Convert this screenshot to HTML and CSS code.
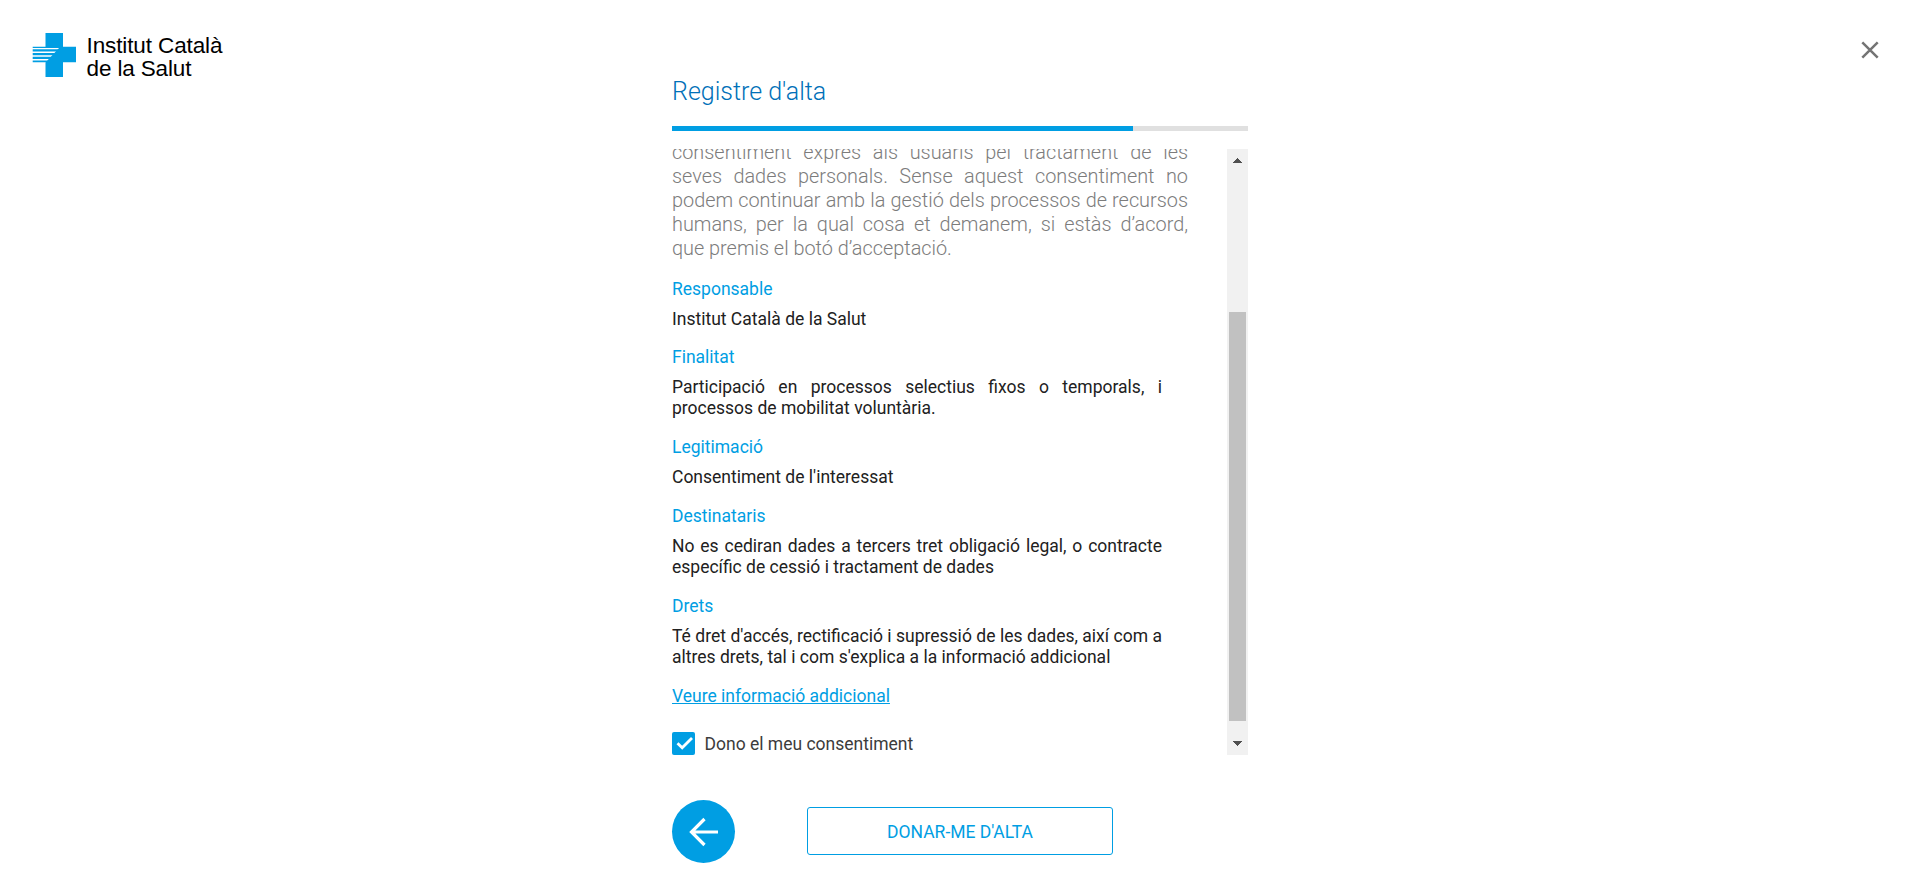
FILE: index.html
```html
<!DOCTYPE html>
<html lang="ca">
<head>
<meta charset="utf-8">
<title>Registre d'alta</title>
<link rel="stylesheet" href="styles.css">
</head>
<body>
<div class="page">
  <header class="side">
    <svg class="logo" viewBox="0 0 200 48" width="200" height="48" role="img">
      <path class="brand" d="M13.500 1H31V14.700H44V30.200H31V45H13.500V30.200H13.800L27 16H.7V14.700H13.500Z"/>
      <path class="brand" d="M.7 17.300H26.500L24.600 19.600H.7ZM.7 21H23.300L21.300 23.300H.7ZM.7 24.700H20L18 27H.7ZM.7 28.400H16.800L15 30.300H.7Z"/>
      <text class="logo-text" x="54.500" y="21.400" textLength="136">Institut Català</text>
      <text class="logo-text" x="54.500" y="43.500" textLength="105">de la Salut</text>
    </svg>
  </header>
  <main class="form">
    <h1 class="title">Registre d'alta</h1>
    <div class="progress"><div class="progress-fill" style="width:80%"></div></div>
    <div class="panel">
      <div class="content">
        <p class="intro">consentiment exprés als usuaris pel tractament de les seves dades personals. Sense aquest consentiment no podem continuar amb la gestió dels processos de recursos humans, per la qual cosa et demanem, si estàs d’acord, que&nbsp;premis el botó d’acceptació.</p>
        <section class="item"><h2>Responsable</h2><p>Institut Català de la Salut</p></section>
        <section class="item"><h2>Finalitat</h2><p>Participació en processos selectius fixos o temporals, i processos de mobilitat voluntària.</p></section>
        <section class="item"><h2>Legitimació</h2><p>Consentiment de l'interessat</p></section>
        <section class="item"><h2>Destinataris</h2><p>No es cediran dades a tercers tret obligació legal, o contracte específic de cessió i tractament de dades</p></section>
        <section class="item"><h2>Drets</h2><p>Té dret d'accés, rectificació i supressió de les dades, així com a altres drets, tal i com s'explica a la informació addicional</p></section>
        <a class="more">Veure informació addicional</a>
        <label class="consent">
          <svg class="check" width="23" height="23" viewBox="0 0 23 23"><rect class="brand" width="23" height="23" rx="2"/><path d="M5.500 11.300L10.200 15.800L20 6" fill="none" stroke="#fff" stroke-width="2.800"/></svg>
          <span>Dono el meu consentiment</span>
        </label>
      </div>
      <div class="scrollbar">
        <svg width="9" height="5" viewBox="0 0 9 5" shape-rendering="crispEdges"><path d="M0 5L4.500 0L9 5Z" fill="#505050"/></svg>
        <div class="thumb"></div>
        <svg width="9" height="5" viewBox="0 0 9 5" shape-rendering="crispEdges"><path d="M0 0H9L4.500 5Z" fill="#505050"/></svg>
      </div>
    </div>
    <div class="actions">
      <button class="back" aria-label="Enrere"><svg width="30" height="30" viewBox="0 0 30 30"><path d="M29 15H3M15.500 2L2.500 15L15.500 28" fill="none" stroke="#fff" stroke-width="3.200"/></svg></button>
      <button class="submit">DONAR-ME D'ALTA</button>
    </div>
  </main>
  <div class="side side-end">
    <svg class="close" width="18" height="18" viewBox="0 0 18 18"><path d="M1.300 1.300L16.700 16.700M16.700 1.300L1.300 16.700" stroke="#747474" stroke-width="2.500"/></svg>
  </div>
</div>
</body>
</html>
```
FILE: styles.css
```css
* { box-sizing: border-box; }
body { margin: 0; background: #fff; font-family: Roboto, sans-serif; overflow: hidden; }
.page { display: grid; grid-template-columns: 1fr 576px 1fr; height: 894px; }
.side { padding: 32px; }
.side-end { display: flex; justify-content: flex-end; align-items: flex-start; padding: 41px 41px 0 0; }
.logo, .close { display: block; }
.brand { fill: #009ee3; }
.logo-text { font-family: "Liberation Sans", Arial, sans-serif; font-size: 22.5px; }
.form { display: flex; flex-direction: column; padding-top: 77px; }
.title { margin: 0; height: 49px; font-size: 25px; line-height: 30px; font-weight: 300; color: #0070b8; }
.progress { height: 5px; background: #e0e0e0; }
.progress-fill { height: 100%; background: #009ee3; }
.panel { display: flex; justify-content: space-between; height: 606px; margin-top: 18px; overflow: hidden; }
.content { width: 516px; }
.intro { margin: -8px 0 17.5px; font-size: 19.88px; line-height: 24px; font-weight: 300; color: #7c7c7c; text-align: justify; }
.item { width: 490px; margin-bottom: 17.9px; font-size: 17.5px; line-height: 21px; }
.item h2 { margin: 0 0 9px; font-size: 17.5px; line-height: 21px; font-weight: 400; color: #009ee3; }
.item p { margin: 0; color: #212121; text-align: justify; }
.more { display: block; font-size: 17.5px; line-height: 21px; color: #009ee3; text-decoration: underline; }
.consent { display: flex; align-items: center; gap: 9.5px; margin-top: 25px; font-size: 17.5px; line-height: 23px; color: #3c3c3c; }
.consent span { padding-top: 1px; margin-bottom: -1px; }
.check { display: block; }
.scrollbar { display: flex; flex-direction: column; align-items: center; width: 21px; padding: 9px 0; background: #f1f1f1; }
.thumb { width: 17px; height: 409px; margin: 149px 0 20px; background: #c1c1c1; }
.actions { display: flex; align-items: flex-start; gap: 72px; margin-top: 45px; }
.back { display: flex; align-items: center; justify-content: center; width: 63px; height: 63px; padding: 0; border: 0; border-radius: 50%; background: #009ee3; }
.submit { width: 306px; height: 48px; margin: 7px 0 0; padding: 2px 0 0; border: 1px solid #009ee3; border-radius: 3px; background: #fff; font: 400 17.5px Roboto, sans-serif; color: #009ee3; }
```
